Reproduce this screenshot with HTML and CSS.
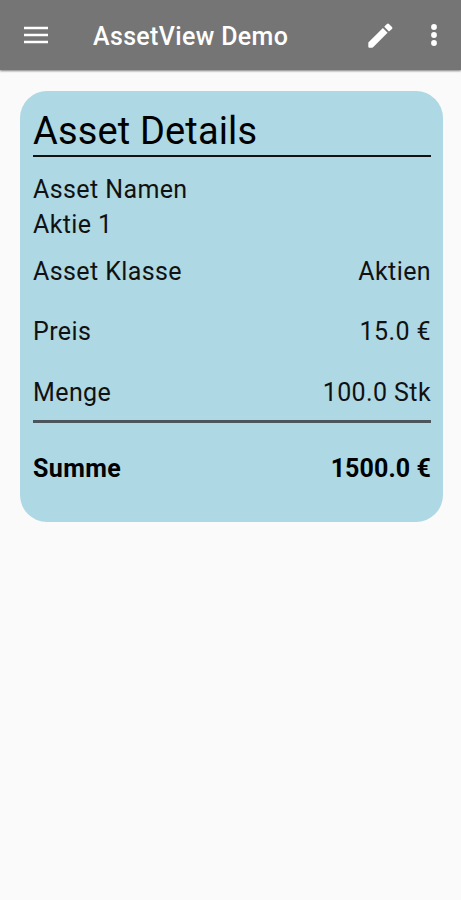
FILE: index.html
```html
<!DOCTYPE html>
<html lang="de">
<head>
    <meta charset="UTF-8">
    <meta name="viewport" content="width=device-width, initial-scale=1.0">
    <title>AssetView Demo</title>
    <link rel="stylesheet" href="styles.css">
</head>
<body>
    <header class="toolbar">
        <svg class="icon menu-icon" viewBox="0 0 26 18">
            <path d="M1 2h24M1 9h24M1 16h24"/>
        </svg>
        <h1 class="toolbar-title">AssetView Demo</h1>
        <svg class="icon edit-icon" viewBox="0 0 74 74">
            <path d="M1 58L44 15L58 29L15 72Q14 73 12 73H4Q1 73 1 70Z"/>
            <path d="M48 11L56 3Q59 0 62 3L71 12Q74 15 71 18L62 25Z"/>
        </svg>
        <svg class="icon more-icon" viewBox="0 0 6 22">
            <circle cx="3" cy="3" r="2.9"/>
            <circle cx="3" cy="11" r="2.9"/>
            <circle cx="3" cy="19" r="2.9"/>
        </svg>
    </header>

    <main class="card">
        <h2 class="card-title">Asset Details</h2>
        <div class="name">
            <p>Asset Namen</p>
            <p>Aktie 1</p>
        </div>
        <div class="row">
            <span>Asset Klasse</span>
            <span>Aktien</span>
        </div>
        <div class="row">
            <span>Preis</span>
            <span>15.0 €</span>
        </div>
        <div class="row last">
            <span>Menge</span>
            <span>100.0 Stk</span>
        </div>
        <!-- Gesamtsumme -->
        <div class="row total">
            <span>Summe</span>
            <span class="total-value">1500.0 €</span>
        </div>
    </main>
</body>
</html>
```
FILE: styles.css
```css
body {
    font-family: Roboto, sans-serif;
    margin: 0;
    background-color: #fafafa;
    color: #111;
}

h1, h2, p {
    margin: 0;
}

.toolbar {
    display: flex;
    align-items: center;
    height: 70px;
    box-sizing: border-box;
    padding: 0 24px 0 23px;
    background-color: #757575;
    box-shadow: 0 1px 2px rgba(0, 0, 0, 0.5);
    color: #fff;
}

.toolbar-title {
    flex: 1;
    margin-left: 44px;
    padding-top: 3px;
    font-size: 25px;
    font-weight: 500;
    letter-spacing: 0.35px;
}

.icon {
    fill: #fff;
}

.menu-icon {
    width: 26px;
    height: 18px;
    stroke: #fff;
    stroke-width: 2.4;
}

.edit-icon {
    width: 25px;
    height: 25px;
    margin-right: 38px;
}

.more-icon {
    width: 6px;
    height: 22px;
}

.card {
    box-sizing: border-box;
    width: 423px;
    height: 431px;
    margin: 21px 0 0 20px;
    padding: 16px 12px 0 13px;
    border-radius: 27px;
    background-color: #add8e4;
    font-size: 25px;
    line-height: 35px;
    letter-spacing: 0.4px;
}

.card-title {
    font-size: 38px;
    font-weight: 400;
    line-height: 48px;
    letter-spacing: 0.15px;
    color: #000;
    border-bottom: 2px solid #111;
}

.name {
    padding-top: 15px;
}

.row {
    display: flex;
    justify-content: space-between;
    padding: 12px 0 13px;
}

.last {
    padding: 13px 0 10px;
    border-bottom: 3px solid #4b565c;
}

.total {
    padding-top: 28px;
    font-weight: 700;
    color: #000;
}

.total-value {
    letter-spacing: 0.1px;
}
```
